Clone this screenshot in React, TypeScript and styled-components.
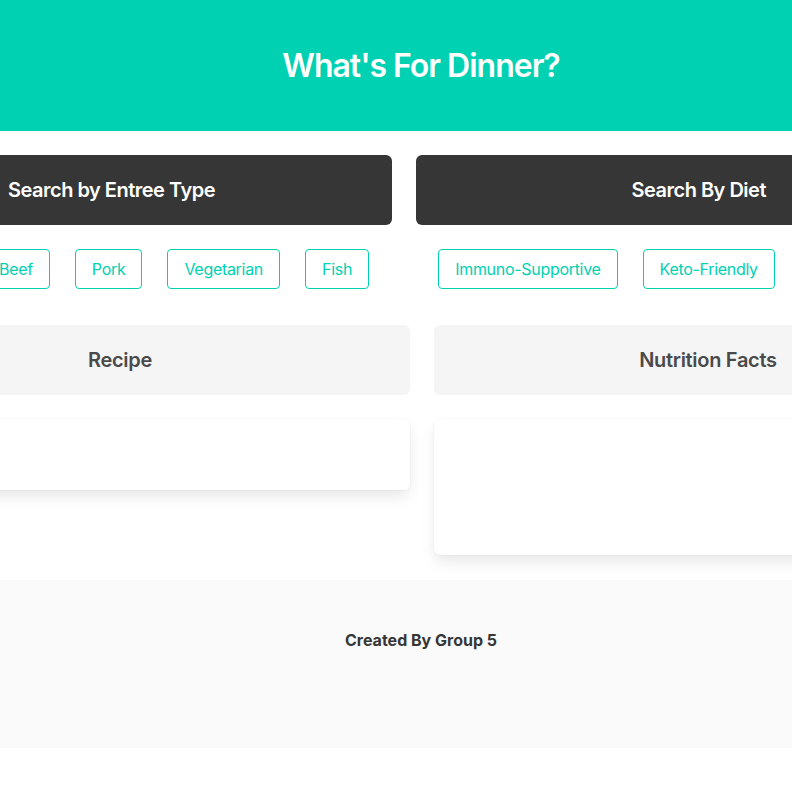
import React from "react";
import styled, { createGlobalStyle } from "styled-components";

const GlobalStyle = createGlobalStyle`
  html, body {
    margin: 0;
    padding: 0;
    background: #ffffff;
    overflow-x: hidden;
  }
  body {
    font-family: Inter, "Noto Sans", "Liberation Sans", sans-serif;
    color: #4a4a4a;
    font-size: 16px;
    line-height: 1.5;
  }
  * { box-sizing: border-box; }
`;

const Page = styled.div`
  width: 842px;
`;

const Hero = styled.header`
  height: 131px;
  background: #00d1b2;
  display: flex;
  align-items: center;
  justify-content: center;
`;

const HeroTitle = styled.h1`
  margin: 0;
  color: #ffffff;
  font-size: 32px;
  font-weight: 600;
  line-height: 1.125;
  letter-spacing: -1px;
`;

const TopSection = styled.section`
  margin: 24px 36px 0 -16px;
  display: grid;
  grid-template-columns: 408px 390px;
  column-gap: 24px;
`;

const Column = styled.div`
  display: flex;
  flex-direction: column;
  gap: 24px;
  min-width: 0;
`;

const Notification = styled.div<{ $tone: "dark" | "light"; $align: "left" | "center" | "right" }>`
  height: 70px;
  border-radius: 6px;
  padding: 20px 40px 20px 24px;
  background: ${(p) => (p.$tone === "dark" ? "#363636" : "#f5f5f5")};
  color: ${(p) => (p.$tone === "dark" ? "#ffffff" : "#4a4a4a")};
  font-size: 20px;
  font-weight: 600;
  line-height: 30px;
  letter-spacing: ${(p) => (p.$tone === "dark" ? "-0.5px" : "-0.3px")};
  text-align: ${(p) => p.$align};
  white-space: nowrap;
`;

const ButtonGroup = styled.div<{ $trail: number }>`
  display: flex;
  justify-content: center;
  gap: 25px;
  padding-right: ${(p) => p.$trail}px;
`;

const TagButton = styled.button`
  height: 40px;
  padding: 0 16px;
  border: 1px solid #00d1b2;
  border-radius: 4px;
  background: #ffffff;
  color: #00d1b2;
  font-family: inherit;
  font-size: 16px;
  line-height: 1.5;
  letter-spacing: -0.3px;
  white-space: nowrap;
  cursor: pointer;
`;

const LowerSection = styled.section`
  margin: 36px -156px 0 -154px;
  display: grid;
  grid-template-columns: 1fr 1fr;
  column-gap: 24px;
  align-items: start;
`;

const Card = styled.div<{ $height: number }>`
  height: ${(p) => p.$height}px;
  background: #ffffff;
  border-radius: 6px;
  box-shadow: 0 8px 16px -2px rgba(10, 10, 10, 0.1), 0 0 0 1px rgba(10, 10, 10, 0.02);
`;

const Footer = styled.footer`
  margin-top: 25px;
  background: #fafafa;
  padding: 48px 24px 96px;
  text-align: center;
  color: #363636;
  font-weight: 700;
  font-size: 16px;
  line-height: 24px;
`;

const entrees = ["Beef", "Pork", "Vegetarian", "Fish"];
const diets = ["Immuno-Supportive", "Keto-Friendly"];

export default function App() {
  return (
    <Page>
      <GlobalStyle />
      <Hero>
        <HeroTitle>What's For Dinner?</HeroTitle>
      </Hero>
      <TopSection>
        <Column>
          <Notification $tone="dark" $align="left">Search by Entree Type</Notification>
          <ButtonGroup $trail={25}>
            {entrees.map((e) => (
              <TagButton key={e}>{e}</TagButton>
            ))}
          </ButtonGroup>
        </Column>
        <Column>
          <Notification $tone="dark" $align="right">Search By Diet</Notification>
          <ButtonGroup $trail={9}>
            {diets.map((d) => (
              <TagButton key={d}>{d}</TagButton>
            ))}
          </ButtonGroup>
        </Column>
      </TopSection>
      <LowerSection>
        <Column>
          <Notification $tone="light" $align="center">Recipe</Notification>
          <Card $height={71} />
        </Column>
        <Column>
          <Notification $tone="light" $align="center">Nutrition Facts</Notification>
          <Card $height={136} />
        </Column>
      </LowerSection>
      <Footer>Created By Group 5</Footer>
    </Page>
  );
}
